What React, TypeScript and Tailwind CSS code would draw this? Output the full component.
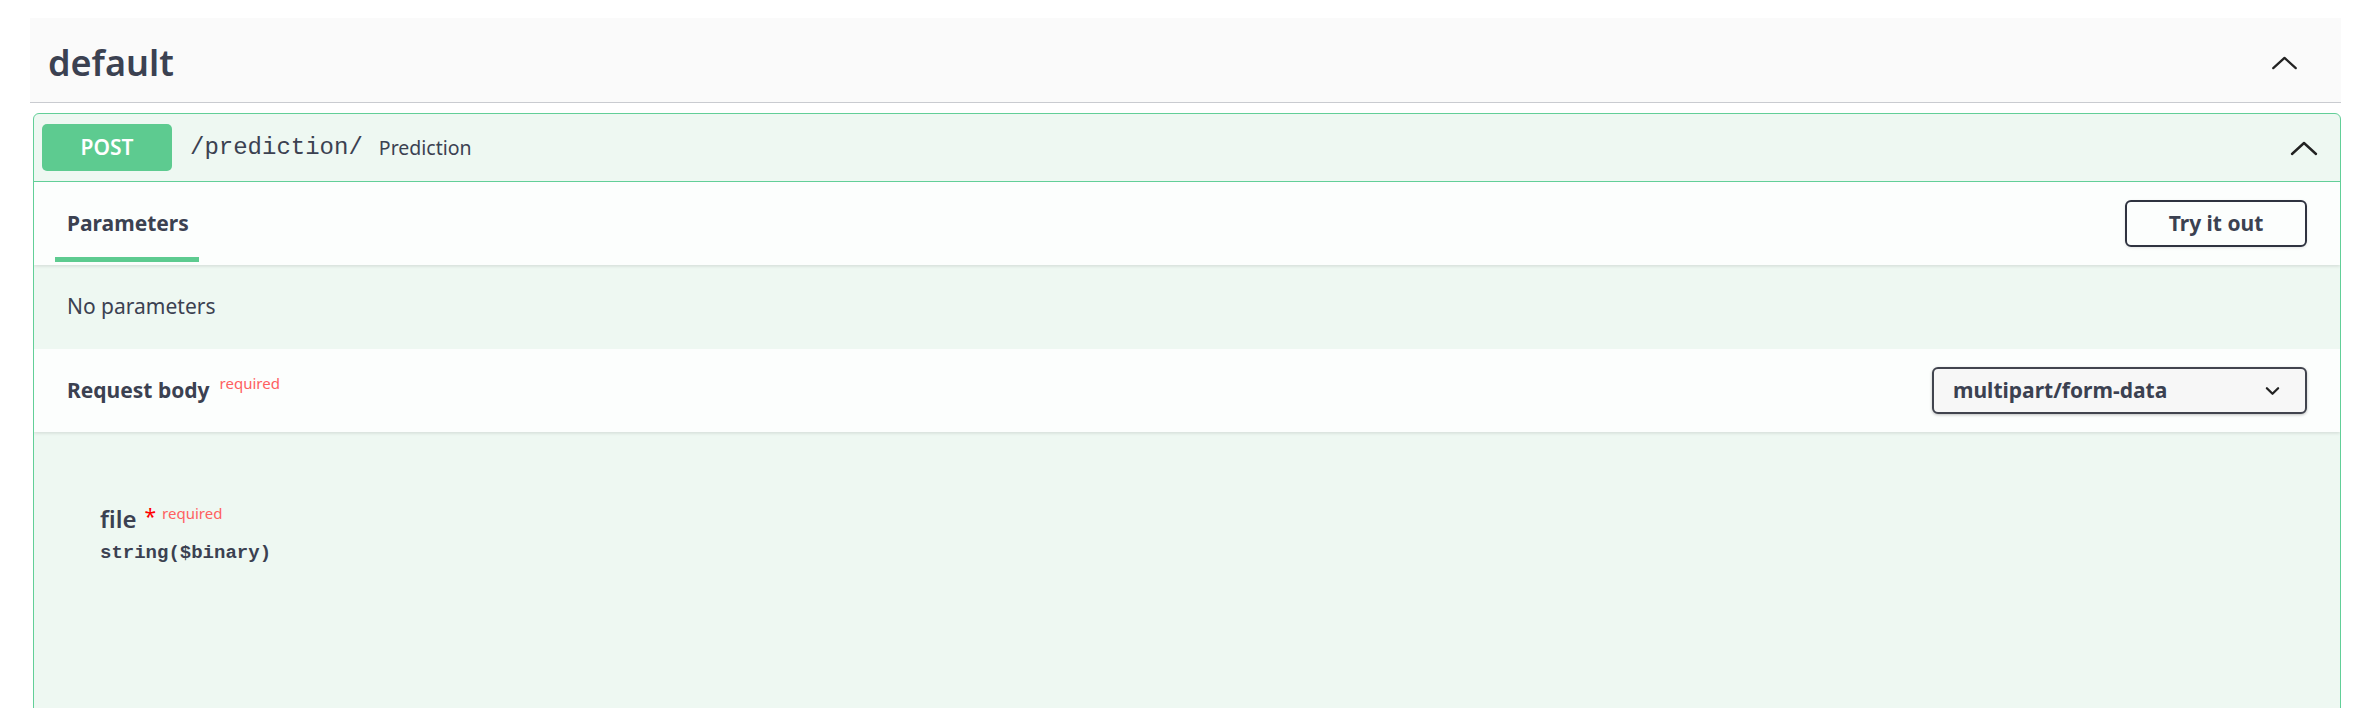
import React from "react";

const sans = "font-['Noto_Sans','Open_Sans',sans-serif]";
const mono = "font-['Liberation_Mono','DejaVu_Sans_Mono',monospace]";

function ChevronUp({ className = "" }: { className?: string }) {
  return (
    <svg viewBox="0 0 28 16" className={className} fill="none">
      <polyline
        points="2,14 14,3 26,14"
        stroke="#222"
        strokeWidth="2.4"
        strokeLinecap="round"
        strokeLinejoin="round"
      />
    </svg>
  );
}

function ChevronDown({ className = "" }: { className?: string }) {
  return (
    <svg viewBox="0 0 16 10" className={className} fill="none">
      <polyline
        points="2,2 8,8 14,2"
        stroke="#222"
        strokeWidth="2.4"
        strokeLinecap="round"
        strokeLinejoin="round"
      />
    </svg>
  );
}

export default function App() {
  return (
    <div className={`w-[2364px] h-[708px] overflow-hidden bg-white pt-[18px] pl-[30px] pr-[23px] text-[#3b4151] ${sans}`}>
      {/* tag header */}
      <div className="flex h-[85px] items-center justify-between border-b-[1.5px] border-[#c9cbd0] bg-[#fafafa] pl-[18px] pr-[43px] pt-[5px]">
        <h3 className="text-[36px] font-semibold leading-none">default</h3>
        <ChevronUp className="h-[15px] w-[27px]" />
      </div>

      {/* operation */}
      <div className="ml-[3px] mt-[10px] h-[620px] overflow-hidden rounded-[6px] border-[1.5px] border-[#62cf98] bg-[#eef8f2]">
        <div className="flex h-[68px] items-center border-b-[1.5px] border-[#62cf98] pl-[8px] pr-[22px]">
          <span className="flex h-[47px] w-[130px] items-center justify-center rounded-[5px] bg-[#5dcb90] text-[21px] font-semibold text-white">
            POST
          </span>
          <span className={`ml-[18px] text-[24px] ${mono}`}>/prediction/</span>
          <span className="ml-[16px] text-[19.5px]">Prediction</span>
          <ChevronUp className="ml-auto h-[16px] w-[28px]" />
        </div>

        {/* parameters tab */}
        <div className="flex h-[83px] items-stretch justify-between bg-[#fcfefd] pr-[33px] shadow-[0_1.5px_3px_rgba(0,0,0,0.1)]">
          <div className="ml-[21px] flex w-[144px] flex-col justify-end">
            <span className="mb-[18px] pl-[12px] text-[21px] font-bold">Parameters</span>
            <div className="mb-[3px] h-[5px] bg-[#5dcb90]" />
          </div>
          <div className="flex items-center">
            <button className="h-[47px] w-[182px] rounded-[6px] border-2 border-[#2f3340] bg-transparent text-[21px] font-bold text-[#3b4151] shadow-[0_1px_3px_rgba(0,0,0,0.1)]">
              Try it out
            </button>
          </div>
        </div>

        <div className="flex h-[84px] items-center pl-[33px] text-[21px]">No parameters</div>

        {/* request body */}
        <div className="flex h-[83px] items-center justify-between bg-[#fcfefd] pl-[33px] pr-[33px] shadow-[0_1.5px_3px_rgba(0,0,0,0.1)]">
          <div className="flex items-start">
            <span className="text-[21px] font-bold">Request body</span>
            <span className="ml-[10px] -mt-[3px] text-[15px] text-[#ff6060]">required</span>
          </div>
          <div className="flex h-[47px] w-[375px] items-center justify-between rounded-[6px] border-2 border-[#41444e] bg-[#f7f7f7] pl-[19px] pr-[25px] shadow-[0_1px_3px_rgba(0,0,0,0.25)]">
            <span className="text-[21px] font-bold">multipart/form-data</span>
            <ChevronDown className="h-[10px] w-[15px]" />
          </div>
        </div>

        <div className="pl-[66px] pt-[71px]">
          <div className="flex items-start">
            <span className="text-[24px] font-semibold leading-[32px]">file</span>
            <span className="ml-[8px] mt-[3px] text-[21px] leading-[20px] text-[#ff0000]">*</span>
            <span className="ml-[6px] text-[15px] leading-[20px] text-[#ff6060]">required</span>
          </div>
          <div className={`mt-[4px] text-[19px] font-semibold ${mono}`}>string($binary)</div>
        </div>
      </div>
    </div>
  );
}
